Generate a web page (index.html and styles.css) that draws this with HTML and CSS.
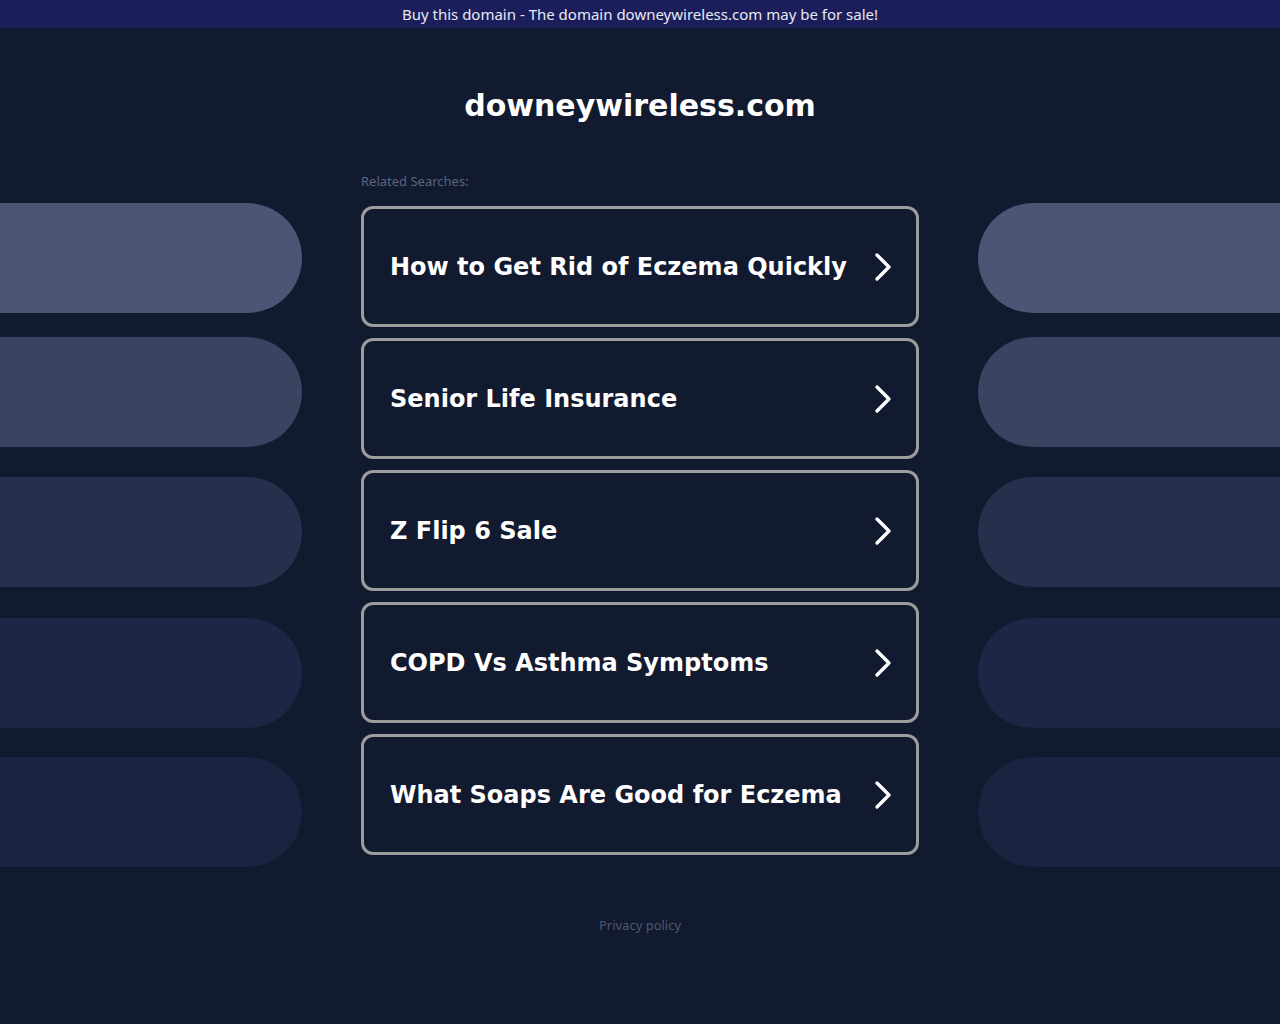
FILE: index.html
```html
<!DOCTYPE html>
<html lang="en">
<head>
    <meta charset="UTF-8">
    <meta name="viewport" content="width=device-width, initial-scale=1.0">
    <title>downeywireless.com</title>
    <link rel="stylesheet" href="styles.css">
</head>
<body>
    <div class="sale-bar">
        <a href="#">Buy this domain - The domain downeywireless.com may be for sale!</a>
    </div>
    <h1 class="domain">downeywireless.com</h1>
    <div class="layout">
        <div class="pills pills-left">
            <div class="pill pill-1"></div>
            <div class="pill pill-2"></div>
            <div class="pill pill-3"></div>
            <div class="pill pill-4"></div>
            <div class="pill pill-5"></div>
        </div>
        <div class="searches">
            <div class="related">Related Searches:</div>
            <a class="search" href="#">
                <span>How to Get Rid of Eczema Quickly</span>
                <svg class="chevron" viewBox="0 0 20 32" width="20" height="32"><path d="M5 4 L17 16 L5 28"/></svg>
            </a>
            <a class="search" href="#">
                <span>Senior Life Insurance</span>
                <svg class="chevron" viewBox="0 0 20 32" width="20" height="32"><path d="M5 4 L17 16 L5 28"/></svg>
            </a>
            <a class="search" href="#">
                <span>Z Flip 6 Sale</span>
                <svg class="chevron" viewBox="0 0 20 32" width="20" height="32"><path d="M5 4 L17 16 L5 28"/></svg>
            </a>
            <a class="search" href="#">
                <span>COPD Vs Asthma Symptoms</span>
                <svg class="chevron" viewBox="0 0 20 32" width="20" height="32"><path d="M5 4 L17 16 L5 28"/></svg>
            </a>
            <a class="search" href="#">
                <span>What Soaps Are Good for Eczema</span>
                <svg class="chevron" viewBox="0 0 20 32" width="20" height="32"><path d="M5 4 L17 16 L5 28"/></svg>
            </a>
        </div>
        <div class="pills pills-right">
            <div class="pill pill-1"></div>
            <div class="pill pill-2"></div>
            <div class="pill pill-3"></div>
            <div class="pill pill-4"></div>
            <div class="pill pill-5"></div>
        </div>
    </div>
    <div class="footer">
        <a href="#">Privacy policy</a>
    </div>
</body>
</html>
```

FILE: styles.css
```css
body {
    margin: 0;
    padding: 0;
    background-color: #121a2f;
    font-family: "DejaVu Sans", sans-serif;
    color: #fff;
}

a {
    text-decoration: none;
}

.sale-bar {
    height: 28px;
    background-color: #1b1e5b;
    text-align: center;
    line-height: 28px;
}

.sale-bar a {
    color: #e8e9f2;
    font-family: "Noto Sans", sans-serif;
    font-size: 15px;
}

.domain {
    margin: 0;
    padding-top: 58px;
    height: 40px;
    line-height: 40px;
    text-align: center;
    font-size: 30px;
    font-weight: bold;
}

.layout {
    display: grid;
    grid-template-columns: 302px 558px 302px;
    justify-content: space-between;
    margin-top: 46px;
}

.pills {
    display: flex;
    flex-direction: column;
    padding-top: 31px;
}

.pill {
    height: 110px;
}

.pills-left .pill {
    border-radius: 0 55px 55px 0;
}

.pills-right .pill {
    border-radius: 55px 0 0 55px;
}

.pill-1 {
    background-color: #4b5674;
}

.pill-2 {
    margin-top: 24px;
    background-color: #3a4461;
}

.pill-3 {
    margin-top: 30px;
    background-color: #262f4c;
}

.pill-4 {
    margin-top: 31px;
    background-color: #1d2644;
}

.pill-5 {
    margin-top: 29px;
    background-color: #1b2340;
}

.searches {
    display: flex;
    flex-direction: column;
    gap: 11px;
}

.related {
    font-family: "Noto Sans", sans-serif;
    font-size: 13px;
    color: #5b6580;
    height: 18px;
    margin-bottom: 5px;
}

.search {
    display: flex;
    align-items: center;
    justify-content: space-between;
    height: 115px;
    padding: 0 24px 0 26px;
    border: 3px solid #9c9c9e;
    border-radius: 12px;
    color: #fff;
    font-size: 24px;
    font-weight: bold;
}

.chevron {
    fill: none;
    stroke: #fff;
    stroke-width: 3.4;
    stroke-linecap: round;
    stroke-linejoin: round;
}

.footer {
    margin-top: 48px;
    text-align: center;
}

.footer a {
    font-family: "Noto Sans", sans-serif;
    font-size: 13px;
    color: #4e5771;
}
```
